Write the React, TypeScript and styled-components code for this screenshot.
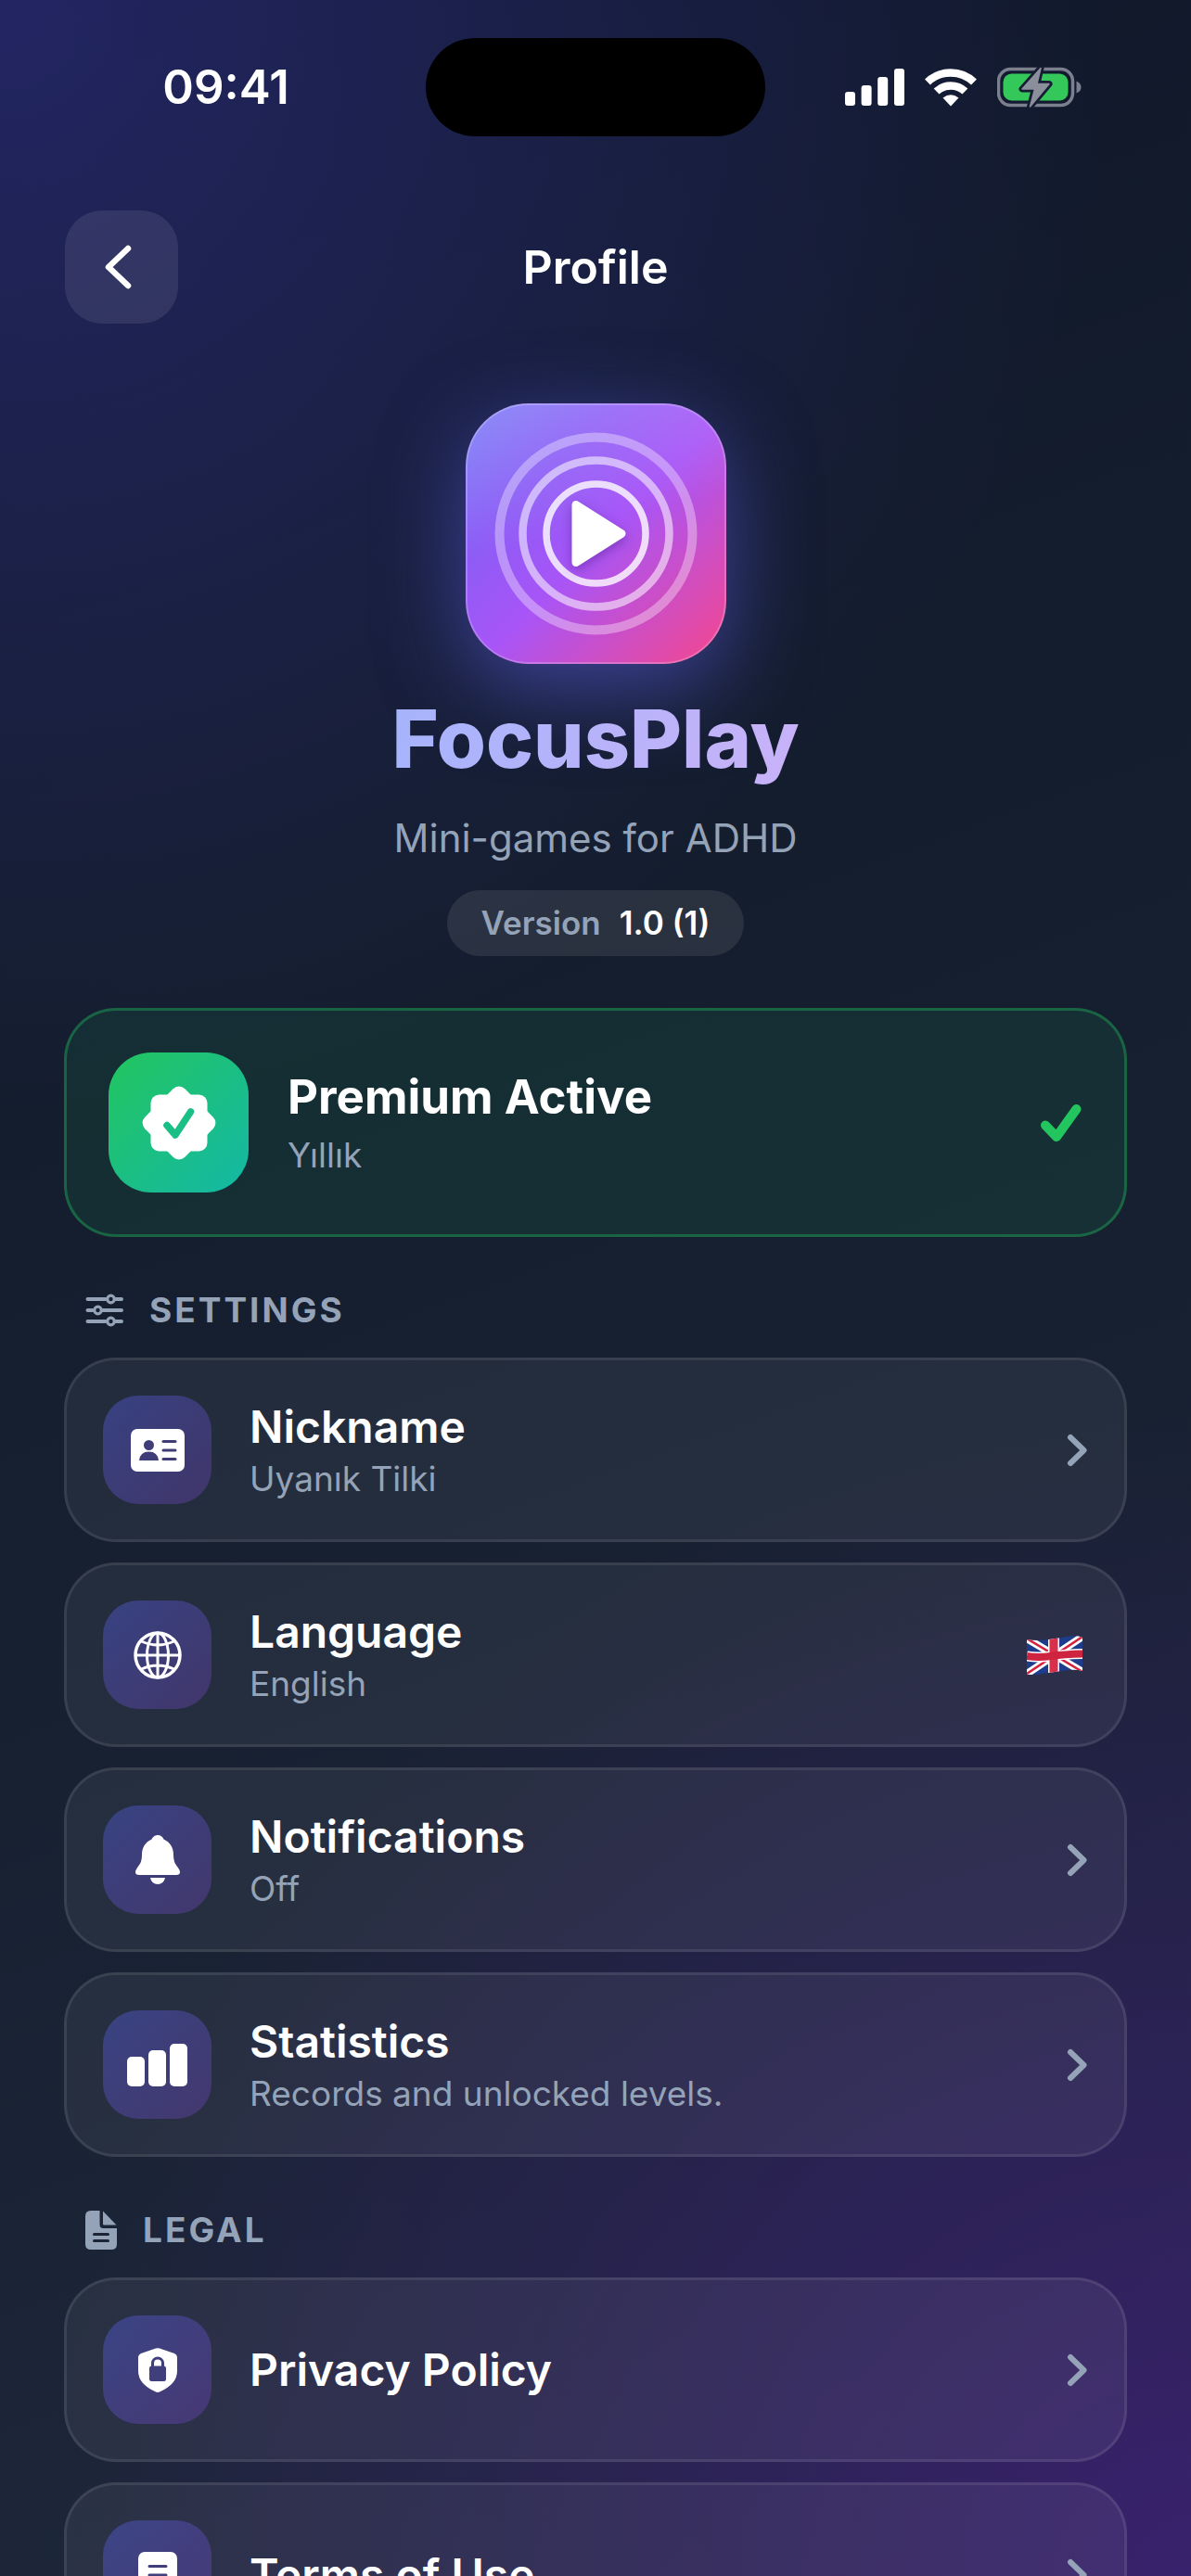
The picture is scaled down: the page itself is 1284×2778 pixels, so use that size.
import React from "react";
import styled, { createGlobalStyle } from "styled-components";

const GlobalStyle = createGlobalStyle`
  *, *::before, *::after { box-sizing: border-box; }
  body {
    margin: 0;
    background: #131c2c;
    font-family: Inter, "Liberation Sans", sans-serif;
    color: #ffffff;
  }
  h1, h2, p { margin: 0; }
  svg { display: block; flex: none; }
`;

const Screen = styled.div`
  height: 100vh;
  overflow-y: auto;
  scrollbar-width: none;
  background:
    radial-gradient(circle 1200px at 0 0, rgba(79, 70, 229, 0.3), rgba(79, 70, 229, 0)),
    radial-gradient(circle 1240px at 100% 100%, rgba(88, 25, 168, 0.46), rgba(76, 29, 149, 0)),
    linear-gradient(160deg, #0f172a 0%, #141d2d 35%, #182132 60%, #1e293b 100%);
`;

const StatusBar = styled.div`
  display: grid;
  grid-template-columns: 1fr 366px 1fr;
  align-items: center;
  padding-top: 41px;
`;

const Clock = styled.time`
  padding-left: 28px;
  text-align: center;
  font-size: 51px;
  line-height: 60px;
  font-weight: 600;
`;

const Island = styled.div`
  height: 106px;
  border-radius: 53px;
  background: #000000;
`;

const StatusIcons = styled.div`
  display: flex;
  align-items: center;
  justify-content: center;
  gap: 22px;
  padding-right: 32px;
`;

const NavBar = styled.header`
  display: grid;
  grid-template-columns: 122px 1fr 122px;
  align-items: center;
  padding: 80px 70px 0;
`;

const BackButton = styled.button`
  display: grid;
  place-items: center;
  height: 122px;
  padding: 0 2px 0 0;
  border: 0;
  border-radius: 40px;
  background: rgba(255, 255, 255, 0.09);
  color: #ffffff;
  cursor: pointer;
`;

const PageTitle = styled.h1`
  text-align: center;
  font-size: 50px;
  line-height: 60px;
  font-weight: 600;
`;

const Content = styled.main`
  padding: 86px 69px 70px;
`;

const Hero = styled.section`
  display: flex;
  flex-direction: column;
  align-items: center;
  gap: 30px;
  margin-bottom: 56px;
`;

const AppLogo = styled.div`
  width: 281px;
  height: 281px;
  border: 2px solid rgba(255, 255, 255, 0.22);
  border-radius: 68px;
  background:
    linear-gradient(165deg, rgba(255, 255, 255, 0.2), rgba(255, 255, 255, 0) 48%) border-box,
    linear-gradient(135deg, #6d72f5 0%, #8b5cf6 28%, #a855f7 52%, #ec4899 94%) border-box;
  box-shadow: 0 26px 90px rgba(99, 102, 241, 0.5);
`;

const Brand = styled.h2`
  font-size: 86px;
  line-height: 102px;
  font-weight: 800;
  background: linear-gradient(110deg, #a5b4fc, #c9b2f8);
  background-clip: text;
  -webkit-background-clip: text;
  color: transparent;
`;

const Tagline = styled.p`
  font-size: 42px;
  line-height: 52px;
  color: #94a3b8;
`;

const VersionPill = styled.div`
  display: flex;
  gap: 20px;
  padding: 13px 37px;
  border-radius: 36px;
  background: rgba(255, 255, 255, 0.09);
  font-size: 35px;
  line-height: 45px;
  font-weight: 600;
`;

const VersionLabel = styled.span`
  color: #94a3b8;
`;

const PremiumCard = styled.section`
  display: flex;
  align-items: center;
  gap: 42px;
  padding: 45px;
  border: 3px solid rgba(34, 197, 94, 0.36);
  border-radius: 56px;
  background: rgba(34, 197, 94, 0.1);
`;

const PremiumTile = styled.div`
  display: grid;
  place-items: center;
  width: 151px;
  height: 151px;
  border-radius: 46px;
  background: linear-gradient(135deg, #22c55e, #14b8a6);
`;

const TextStack = styled.div<{ $gap: number }>`
  display: flex;
  flex: 1;
  flex-direction: column;
  gap: ${(p) => p.$gap}px;
`;

const PremiumTitle = styled.h2`
  font-size: 51px;
  line-height: 62px;
  font-weight: 700;
`;

const RowTitle = styled.span`
  font-size: 48px;
  line-height: 58px;
  font-weight: 600;
`;

const Caption = styled.span`
  font-size: 37px;
  line-height: 46px;
  font-weight: 400;
  color: #94a3b8;
`;

const Section = styled.section`
  padding-top: 55px;
`;

const SectionHead = styled.div`
  display: flex;
  align-items: center;
  gap: 28px;
  height: 48px;
  margin-bottom: 27px;
  padding-left: 23px;
  color: #94a3b8;
`;

const SectionTitle = styled.h2`
  font-size: 37px;
  line-height: 46px;
  font-weight: 700;
  letter-spacing: 3px;
`;

const Rows = styled.div`
  display: flex;
  flex-direction: column;
  gap: 22px;
`;

const Row = styled.button`
  display: flex;
  align-items: center;
  gap: 41px;
  width: 100%;
  padding: 38px 39px;
  border: 3px solid rgba(255, 255, 255, 0.09);
  border-radius: 56px;
  background: rgba(255, 255, 255, 0.06);
  color: #ffffff;
  font-family: inherit;
  text-align: left;
  text-decoration: none;
  cursor: pointer;
`;

const IconTile = styled.span`
  display: grid;
  place-items: center;
  width: 117px;
  height: 117px;
  border-radius: 38px;
  background: linear-gradient(135deg, rgba(85, 98, 232, 0.4), rgba(140, 75, 225, 0.28));
`;

const FlagSlot = styled.span`
  padding-right: 6px;
`;

const SignalIcon = () => (
  <svg width="64" height="40" viewBox="0 0 64 40" fill="#fff">
    <rect x="0" y="25" width="11" height="15" rx="3" />
    <rect x="17.6" y="18" width="11" height="22" rx="3" />
    <rect x="35.2" y="9" width="11" height="31" rx="3" />
    <rect x="53" y="0" width="11" height="40" rx="3" />
  </svg>
);

const WifiIcon = () => (
  <svg width="56" height="41" viewBox="0 0 56 41" fill="none" stroke="#fff" strokeWidth="8.5">
    <path d="M3 14.5a36 36 0 0 1 50 0" />
    <path d="M12.600 24.500a22.500 22.500 0 0 1 30.800 0" />
    <path d="M19.500 31.500q8.500-6.500 17 0L28 40.500z" fill="#fff" stroke="none" />
  </svg>
);

const BatteryIcon = () => (
  <svg width="91" height="44" viewBox="0 0 91 44">
    <rect x="1.500" y="2.500" width="80" height="39" rx="13" fill="none" stroke="#7b7f8e" strokeWidth="3.500" />
    <rect x="6.500" y="7.500" width="70" height="29" rx="9" fill="#34c759" />
    <path d="M85.500 15.500q5 2 5 6.500t-5 6.500z" fill="#7b7f8e" />
    <path
      d="M47 1.500 27 24h13.500l-5 19L56 18.500H43z"
      fill="#8b8e9b" stroke="#151c33" strokeWidth="7" strokeLinejoin="round" paintOrder="stroke"
    />
    <path d="M47 1.500 27 24h13.500l-5 19L56 18.500H43z" fill="#8b8e9b" stroke="#8b8e9b" strokeWidth="1.500" strokeLinejoin="round" />
  </svg>
);

const BackIcon = () => (
  <svg width="36" height="50" viewBox="0 0 36 50" fill="none" stroke="#fff" strokeWidth="6.500" strokeLinecap="round" strokeLinejoin="round">
    <path d="M26 5 5 25l21 20" />
  </svg>
);

const LogoMark = () => (
  <svg width="277" height="277" viewBox="-138.500 -138.500 277 277" fill="none" stroke="#fff">
    <circle r="104" strokeWidth="10" strokeOpacity="0.35" />
    <circle r="79" strokeWidth="8.500" strokeOpacity="0.55" />
    <circle r="53.500" strokeWidth="7.500" strokeOpacity="0.8" />
    <path
      d="M-21.500-31v62l49-31z" fill="#fff" strokeWidth="9" strokeLinejoin="round"
      style={{ filter: "drop-shadow(0 4px 6px rgba(60,20,110,.4))" }}
    />
  </svg>
);

const SealIcon = () => (
  <svg width="82" height="82" viewBox="-41 -41 82 82">
    <rect x="-30.500" y="-30.500" width="61" height="61" rx="9" fill="#fff" />
    <rect x="-30.500" y="-30.500" width="61" height="61" rx="9" fill="#fff" transform="rotate(45)" />
    <path d="M-13 2.500-4 13 12.500-12" fill="none" stroke="#1abf86" strokeWidth="7.500" strokeLinecap="round" strokeLinejoin="round" />
  </svg>
);

const CheckIcon = () => (
  <svg width="46" height="44" viewBox="0 0 46 44" fill="none" stroke="#22c55e" strokeWidth="10" strokeLinecap="round" strokeLinejoin="round">
    <path d="M6 24.500 18 37 39.500 7" />
  </svg>
);

const ChevronIcon = () => (
  <svg width="28" height="40" viewBox="0 0 28 40" fill="none" stroke="#94a3b8" strokeWidth="6" strokeLinecap="round" strokeLinejoin="round">
    <path d="M9 6l14.500 14L9 34" />
  </svg>
);

const SlidersIcon = () => (
  <svg width="41" height="36" viewBox="0 0 41 36" fill="none" stroke="#94a3b8" strokeWidth="4" strokeLinecap="round">
    <path d="M2.500 6h19M33 6h6M2.500 18h5M19 18h20M2.500 30h19M33 30h6" />
    <circle cx="27.500" cy="6" r="3.800" strokeWidth="3.200" />
    <circle cx="13.500" cy="18" r="3.800" strokeWidth="3.200" />
    <circle cx="27.500" cy="30" r="3.800" strokeWidth="3.200" />
  </svg>
);

const FileIcon = () => (
  <svg width="34" height="42" viewBox="0 0 34 42" fill="#94a3b8">
    <path
      fillRule="evenodd"
      d="M6 0h9.500v15q0 4 4 4H34v17q0 6-6 6H6q-6 0-6-6V6q0-6 6-6zM9.500 24a1.500 1.500 0 0 0 0 3h15a1.500 1.500 0 0 0 0-3zM9.500 31a1.500 1.500 0 0 0 0 3h15a1.500 1.500 0 0 0 0-3z"
    />
    <path d="M19 .5 33.500 15.500H20q-1 0-1-1z" />
  </svg>
);

const IdCardIcon = () => (
  <svg width="58" height="46" viewBox="0 0 58 46">
    <rect width="58" height="46" rx="7" fill="#fff" />
    <g fill="#3f3d78">
      <circle cx="19.500" cy="17.500" r="5.500" />
      <path d="M9 34q1-9.500 10.500-9.500T30 34z" />
      <rect x="33.500" y="12" width="16" height="3" rx="1.500" />
      <rect x="33.500" y="21.500" width="16" height="3" rx="1.500" />
      <rect x="33.500" y="31" width="16" height="3" rx="1.500" />
    </g>
  </svg>
);

const GlobeIcon = () => (
  <svg width="52" height="52" viewBox="0 0 52 52" fill="none" stroke="#fff" strokeWidth="3">
    <circle cx="26" cy="26" r="24" strokeWidth="3.500" />
    <ellipse cx="26" cy="26" rx="11.500" ry="24" />
    <path d="M26 2v48M2 26h48M8.500 11q17.500 8 35 0M8.500 41q17.500-8 35 0" />
  </svg>
);

const BellIcon = () => (
  <svg width="48" height="53" viewBox="0 0 48 53" fill="#fff">
    <path d="M24 0q4.500 0 6.500 4.500C38 8 41 14 41 21c0 9 3 11 5.500 15Q48 38 48 40q0 3-4 3H4q-4 0-4-3 0-2 1.500-4C4 32 7 30 7 21 7 14 10 8 17.500 4.500 19.500 0 24 0 24 0z" />
    <path d="M16 46h16q-1.500 7-8 7t-8-7z" />
  </svg>
);

const BarsIcon = () => (
  <svg width="65" height="46" viewBox="0 0 65 46" fill="#fff">
    <rect x="0" y="14" width="19" height="32" rx="5" />
    <rect x="23" y="7" width="19" height="39" rx="5" />
    <rect x="46" y="0" width="19" height="46" rx="5" />
  </svg>
);

const ShieldIcon = () => (
  <svg width="42" height="48" viewBox="0 0 42 48">
    <path d="M19 .6q2-.8 4 0l16 5.400q3 1 3 4.500V25q0 14-19 22.500-2 .8-4 0Q0 39 0 25V10.500Q0 7 3 6z" fill="#fff" />
    <rect x="12" y="19.500" width="18" height="16.500" rx="2.500" fill="#403f7c" />
    <path d="M15.500 21v-4.500a5.500 5.500 0 0 1 11 0V21" fill="none" stroke="#403f7c" strokeWidth="3" />
  </svg>
);

const DocIcon = () => (
  <svg width="42" height="50" viewBox="0 0 42 50">
    <rect width="42" height="50" rx="7" fill="#fff" />
    <path d="M12 15.500h18M12 25h18M12 34.500h11" stroke="#403f7c" strokeWidth="3" strokeLinecap="round" />
  </svg>
);

const FlagIcon = () => (
  <svg width="60" height="42" viewBox="0 0 60 42">
    <defs>
      <clipPath id="wave">
        <path d="M0 4q10 2 24 0T46 .5 60 2v36q-7-2-19-.5T14 41.500 0 40z" />
      </clipPath>
    </defs>
    <g clipPath="url(#wave)">
      <rect width="60" height="42" fill="#1d3c8c" />
      <path d="M0 3l60 36M0 41 60 1" stroke="#fff" strokeWidth="8" />
      <path d="M0 3l60 36M0 41 60 1" stroke="#d4213d" strokeWidth="2.500" />
      <path d="M29 0v42" stroke="#fff" strokeWidth="12" />
      <path d="M0 22q12 2 26 0t34-2.500" stroke="#fff" strokeWidth="11" fill="none" />
      <path d="M29 0v42" stroke="#d8304a" strokeWidth="9" />
      <path d="M0 22q12 2 26 0t34-2.500" stroke="#cf2440" strokeWidth="8" fill="none" />
    </g>
  </svg>
);

type Item = { title: string; caption?: string; icon: React.ReactNode; end?: React.ReactNode };

const settings: Item[] = [
  { title: "Nickname", caption: "Uyanık Tilki", icon: <IdCardIcon /> },
  { title: "Language", caption: "English", icon: <GlobeIcon />, end: <FlagSlot><FlagIcon /></FlagSlot> },
  { title: "Notifications", caption: "Off", icon: <BellIcon /> },
  { title: "Statistics", caption: "Records and unlocked levels.", icon: <BarsIcon /> },
];

const legal: Item[] = [
  { title: "Privacy Policy", icon: <ShieldIcon /> },
  { title: "Terms of Use", icon: <DocIcon /> },
];

const RowContent = ({ item }: { item: Item }) => (
  <>
    <IconTile>{item.icon}</IconTile>
    <TextStack as="span" $gap={4}>
      <RowTitle>{item.title}</RowTitle>
      {item.caption && <Caption>{item.caption}</Caption>}
    </TextStack>
    {item.end ?? <ChevronIcon />}
  </>
);

export default function App() {
  return (
    <>
      <GlobalStyle />
      <Screen>
        <StatusBar>
          <Clock>09:41</Clock>
          <Island />
          <StatusIcons>
            <SignalIcon />
            <WifiIcon />
            <BatteryIcon />
          </StatusIcons>
        </StatusBar>
        <NavBar>
          <BackButton aria-label="Back">
            <BackIcon />
          </BackButton>
          <PageTitle>Profile</PageTitle>
        </NavBar>
        <Content>
          <Hero>
            <AppLogo>
              <LogoMark />
            </AppLogo>
            <Brand>FocusPlay</Brand>
            <Tagline>Mini-games for ADHD</Tagline>
            <VersionPill>
              <VersionLabel>Version</VersionLabel>
              <span>1.0 (1)</span>
            </VersionPill>
          </Hero>
          <PremiumCard>
            <PremiumTile>
              <SealIcon />
            </PremiumTile>
            <TextStack $gap={9}>
              <PremiumTitle>Premium Active</PremiumTitle>
              <Caption>Yıllık</Caption>
            </TextStack>
            <CheckIcon />
          </PremiumCard>
          <Section>
            <SectionHead>
              <SlidersIcon />
              <SectionTitle>SETTINGS</SectionTitle>
            </SectionHead>
            <Rows>
              {settings.map((item) => (
                <Row key={item.title} type="button">
                  <RowContent item={item} />
                </Row>
              ))}
            </Rows>
          </Section>
          <Section>
            <SectionHead>
              <FileIcon />
              <SectionTitle>LEGAL</SectionTitle>
            </SectionHead>
            <Rows>
              {legal.map((item) => (
                <Row key={item.title} as="a" href="#">
                  <RowContent item={item} />
                </Row>
              ))}
            </Rows>
          </Section>
        </Content>
      </Screen>
    </>
  );
}
